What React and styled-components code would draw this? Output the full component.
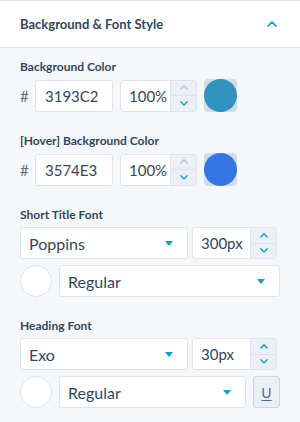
import React from 'react';
import styled, { createGlobalStyle } from 'styled-components';

const GlobalStyle = createGlobalStyle`
    body {
        margin: 0;
        background: #f5f8fa;
        font-family: "Lato", "Noto Sans", sans-serif;
        color: #33475b;
    }
`;

const Panel = styled.div`
    width: 300px;
    min-height: 422px;
    background: #f5f8fa;
    border-top: 1px solid #dfe3eb;
    box-sizing: border-box;
`;

const Header = styled.div`
    height: 46px;
    background: #ffffff;
    border-bottom: 1px solid #dfe3eb;
    display: flex;
    align-items: center;
    justify-content: space-between;
    padding: 0 20px;
`;

const HeaderTitle = styled.div`
    font-size: 13px;
    font-weight: 700;
    color: #33475b;
`;

const Body = styled.div`
    padding: 11px 20px 0;
    display: flex;
    flex-direction: column;
    gap: 21px;
`;

const Section = styled.div`
    display: flex;
    flex-direction: column;
`;

const Label = styled.div`
    font-size: 12px;
    font-weight: 700;
    line-height: 16px;
    margin-bottom: 4px;
    color: #33475b;
`;

const Row = styled.div`
    display: flex;
    align-items: center;
    gap: ${p => p.$gap || 7}px;
    & + & {
        margin-top: 6px;
    }
`;

const Hash = styled.span`
    width: 8px;
    font-size: 15px;
    color: #516f90;
`;

const Field = styled.div`
    width: ${p => p.$width}px;
    height: 32px;
    box-sizing: border-box;
    background: #ffffff;
    border: 1px solid #dfe3eb;
    border-radius: 3px;
    display: flex;
    align-items: center;
    overflow: hidden;
`;

const FieldText = styled.span`
    flex: 1;
    padding-left: ${p => p.$pad || 8}px;
    font-size: ${p => p.$size || 15}px;
    color: #33475b;
`;

const Stepper = styled.div`
    width: 25px;
    height: 100%;
    background: #eaf0f6;
    border-left: 1px solid #dfe3eb;
    display: flex;
    flex-direction: column;
`;

const StepHalf = styled.div`
    flex: 1;
    display: flex;
    align-items: center;
    justify-content: center;
    color: ${p => (p.$muted ? '#b0c1d4' : '#00a4bd')};
    & + & {
        border-top: 1px solid #dfe3eb;
    }
`;

const Swatch = styled.div`
    width: 33px;
    height: 33px;
    border-radius: 4px;
    background: #d3dce6;
    position: relative;
    &::after {
        content: '';
        position: absolute;
        inset: 0;
        border-radius: 50%;
        background: ${p => p.$color};
    }
`;

const Caret = styled.span`
    width: 0;
    height: 0;
    margin-right: 14px;
    border-left: 4px solid transparent;
    border-right: 4px solid transparent;
    border-top: 5px solid #00a4bd;
`;

const ColorDot = styled.div`
    width: 32px;
    height: 32px;
    box-sizing: border-box;
    border-radius: 50%;
    background: #ffffff;
    border: 1px solid #dfe3eb;
`;

const UnderlineButton = styled.div`
    width: 27px;
    height: 32px;
    box-sizing: border-box;
    background: #eaf0f6;
    border: 1px solid #cbd6e2;
    border-radius: 3px;
    display: flex;
    align-items: center;
    justify-content: center;
    font-size: 14px;
    color: #516f90;
    text-decoration: underline;
    text-underline-offset: 2px;
`;

const Chevron = ({ up, size = 10 }) => (
    <svg width={size} height={size * 0.6} viewBox="0 0 10 6" fill="none">
        <path
            d={up ? 'M1 5 L5 1 L9 5' : 'M1 1 L5 5 L9 1'}
            stroke="currentColor"
            strokeWidth="1.6"
            strokeLinecap="round"
            strokeLinejoin="round"
        />
    </svg>
);

const HeaderChevron = styled.span`
    color: #00a4bd;
    display: flex;
    margin-right: 3px;
`;

function ColorSection({ label, hex, color }) {
    return (
        <Section>
            <Label>{label}</Label>
            <Row>
                <Hash>#</Hash>
                <Field $width={78}>
                    <FieldText $pad={9}>{hex}</FieldText>
                </Field>
                <Field $width={77}>
                    <FieldText $pad={8}>100%</FieldText>
                    <Stepper>
                        <StepHalf $muted><Chevron up size={8} /></StepHalf>
                        <StepHalf><Chevron size={8} /></StepHalf>
                    </Stepper>
                </Field>
                <Swatch $color={color} />
            </Row>
        </Section>
    );
}

function FontSection({ label, font, size, underline }) {
    return (
        <Section>
            <Label>{label}</Label>
            <Row $gap={4}>
                <Field $width={168}>
                    <FieldText $size={16} $pad={8}>{font}</FieldText>
                    <Caret />
                </Field>
                <Field $width={85}>
                    <FieldText $pad={8}>{size}</FieldText>
                    <Stepper>
                        <StepHalf><Chevron up size={8} /></StepHalf>
                        <StepHalf><Chevron size={8} /></StepHalf>
                    </Stepper>
                </Field>
            </Row>
            <Row>
                <ColorDot />
                <Field $width={underline ? 187 : 221}>
                    <FieldText $size={16} $pad={8}>Regular</FieldText>
                    <Caret />
                </Field>
                {underline && <UnderlineButton>U</UnderlineButton>}
            </Row>
        </Section>
    );
}

export default function App() {
    return (
        <>
            <GlobalStyle />
            <Panel>
                <Header>
                    <HeaderTitle>Background &amp; Font Style</HeaderTitle>
                    <HeaderChevron><Chevron up size={10} /></HeaderChevron>
                </Header>
                <Body>
                    <ColorSection label="Background Color" hex="3193C2" color="#3193c2" />
                    <ColorSection label="[Hover] Background Color" hex="3574E3" color="#3574e3" />
                    <FontSection label="Short Title Font" font="Poppins" size="300px" />
                    <FontSection label="Heading Font" font="Exo" size="30px" underline />
                </Body>
            </Panel>
        </>
    );
}
